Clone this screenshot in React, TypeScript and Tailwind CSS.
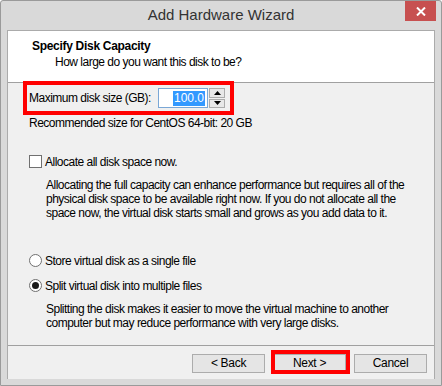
import React from "react";

const font = { fontFamily: '"Liberation Sans", Arial, sans-serif' };

function Btn({ label }: { label: string }) {
  return (
    <div className="w-[73px] h-[19px] border border-[#acacac] bg-[#e5e5e5] flex items-center justify-center text-[12px] tracking-[-0.3px] text-black leading-none">
      {label}
    </div>
  );
}

export default function App() {
  return (
    <div
      className="relative w-[442px] h-[386px] bg-[#d9d9d9] border border-[#9a9a9a] rounded-t-[3px] flex flex-col text-black whitespace-nowrap"
      style={font}
    >
      {/* title bar */}
      <div className="relative h-[29px] flex items-center justify-center">
        <span className="text-[15px] text-[#333333]">Add Hardware Wizard</span>
        <div className="absolute right-[5px] top-0 w-[31px] h-[20px] bg-[#c75050] flex items-center justify-center">
          <svg width="10" height="9" viewBox="0 0 10 9">
            <path d="M1 0.5 L9 8.5 M9 0.5 L1 8.5" stroke="white" strokeWidth="2" />
          </svg>
        </div>
      </div>

      {/* client */}
      <div className="mx-[6px] h-[349px] border border-[#ababab] border-b-0 bg-[#f0f0f0] flex flex-col">
        {/* header */}
        <div className="h-[52px] bg-white border-b border-[#a0a0a0] pl-[24px] pt-[7px]">
          <div className="text-[12px] font-bold leading-[16px] tracking-[-0.3px]">Specify Disk Capacity</div>
          <div className="pl-[23px] text-[12px] leading-[16px] tracking-[-0.5px]">How large do you want this disk to be?</div>
        </div>

        {/* body */}
        <div className="flex-1 pl-[21px] text-[12px] leading-[14px] tracking-[-0.5px]">
          <div className="mt-[5px] flex items-center h-[20px]">
            <span className="w-[129px]">Maximum disk size (GB):</span>
            <div className="w-[50px] h-[20px] border border-[#7aa7d6] bg-white flex items-center justify-end pr-[2px]">
              <span className="bg-[#3399ff] text-white px-[1px] leading-[15px] tracking-normal">100.0</span>
            </div>
            <div className="ml-[1px] w-[16px] h-[20px] flex flex-col gap-[1px]">
              <div className="flex-1 border border-[#acacac] bg-[#e8e8e8] flex items-center justify-center">
                <svg width="7" height="4" viewBox="0 0 7 4"><path d="M3.5 0 L7 4 L0 4 Z" fill="#000" /></svg>
              </div>
              <div className="flex-1 border border-[#acacac] bg-[#e8e8e8] flex items-center justify-center">
                <svg width="7" height="4" viewBox="0 0 7 4"><path d="M0 0 L7 0 L3.5 4 Z" fill="#000" /></svg>
              </div>
            </div>
          </div>
          <div className="mt-[8px]">Recommended size for CentOS 64-bit: 20 GB</div>

          <div className="mt-[25px] flex items-center h-[13px] gap-[3px]">
            <div className="w-[13px] h-[13px] border border-[#707070] bg-white" />
            <span>Allocate all disk space now.</span>
          </div>
          <div className="mt-[10px] pl-[17px]">
            Allocating the full capacity can enhance performance but requires all of the
            <br />
            physical disk space to be available right now. If you do not allocate all the
            <br />
            space now, the virtual disk starts small and grows as you add data to it.
          </div>

          <div className="mt-[34px] flex items-center h-[13px] gap-[3px]">
            <div className="w-[13px] h-[13px] rounded-full border border-[#707070] bg-white" />
            <span>Store virtual disk as a single file</span>
          </div>
          <div className="mt-[12px] flex items-center h-[13px] gap-[3px]">
            <div className="w-[13px] h-[13px] rounded-full border border-[#707070] bg-white flex items-center justify-center">
              <div className="w-[7px] h-[7px] rounded-full bg-[#1a1a1a]" />
            </div>
            <span>Split virtual disk into multiple files</span>
          </div>
          <div className="mt-[10px] pl-[17px]">
            Splitting the disk makes it easier to move the virtual machine to another
            <br />
            computer but may reduce performance with very large disks.
          </div>
        </div>

        {/* footer */}
        <div className="h-[34px] border-t border-[#a0a0a0] flex items-center justify-end gap-[8px] pr-[7px] pt-[1px]">
          <Btn label="< Back" />
          <Btn label="Next >" />
          <Btn label="Cancel" />
        </div>
      </div>

      {/* annotation boxes */}
      <div className="absolute left-[22px] top-[80px] w-[211px] h-[34px] border-[4px] border-[#ff0000]" />
      <div className="absolute left-[270px] top-[349px] w-[79px] h-[24px] border-[4px] border-[#ff0000]" />
    </div>
  );
}
